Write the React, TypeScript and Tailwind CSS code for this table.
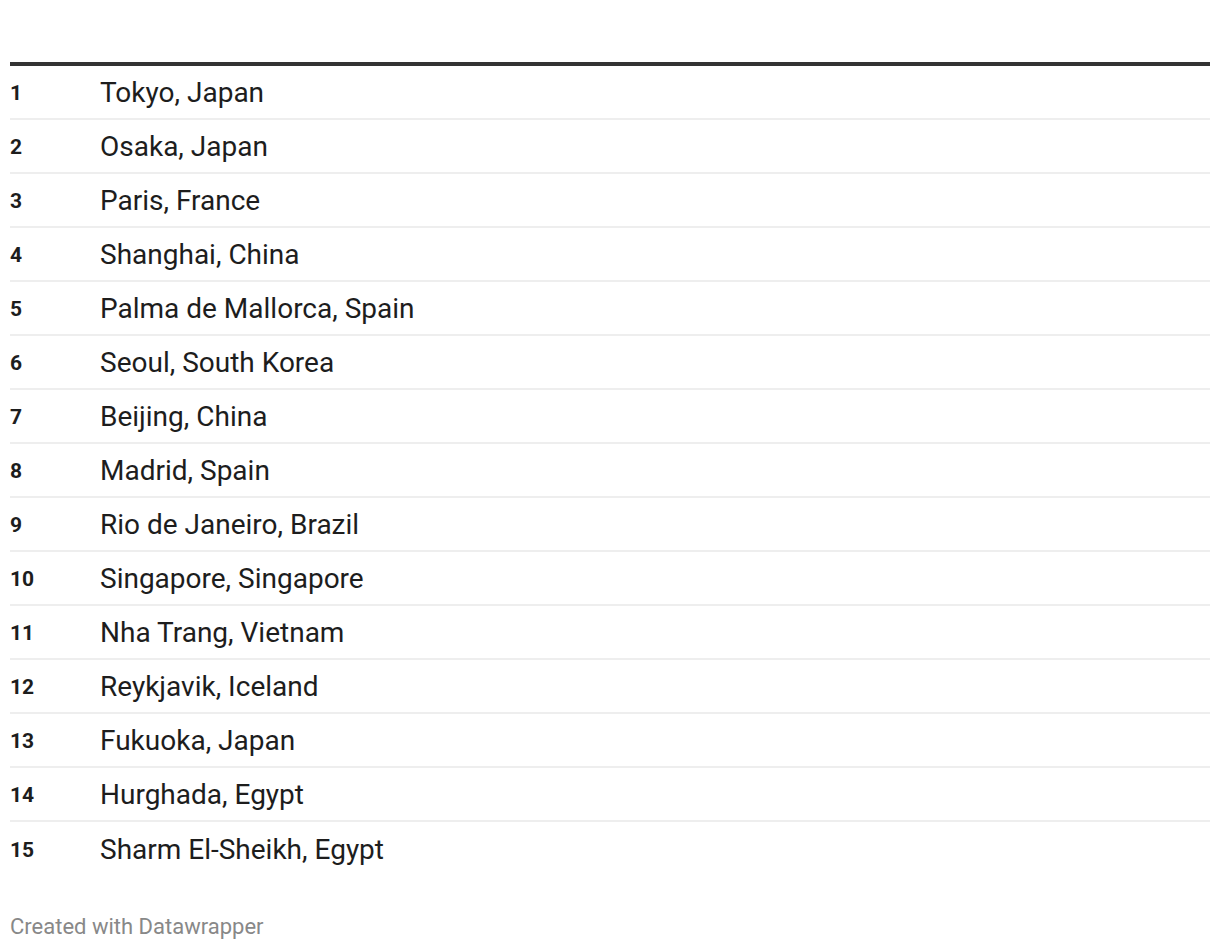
import React from "react";

const rows = [
  "Tokyo, Japan",
  "Osaka, Japan",
  "Paris, France",
  "Shanghai, China",
  "Palma de Mallorca, Spain",
  "Seoul, South Korea",
  "Beijing, China",
  "Madrid, Spain",
  "Rio de Janeiro, Brazil",
  "Singapore, Singapore",
  "Nha Trang, Vietnam",
  "Reykjavik, Iceland",
  "Fukuoka, Japan",
  "Hurghada, Egypt",
  "Sharm El-Sheikh, Egypt",
];

export default function App() {
  return (
    <div className="w-[1220px] h-[950px] bg-white px-[10px] pt-[62px] font-['Roboto',_'Liberation_Sans',_sans-serif] text-[#1d1d1d]">
      <div className="border-t-4 border-[#333333]">
        {rows.map((city, i) => (
          <div
            key={i}
            className={`flex items-center h-[54px] pt-[2px] ${i < rows.length - 1 ? "border-b-2 border-[#eeeeee]" : ""}`}
          >
            <div className="w-[90px] text-[21px] font-bold leading-none">{i + 1}</div>
            <div className="text-[28px] leading-none">{city}</div>
          </div>
        ))}
      </div>
      <div className="mt-[40px] text-[22px] leading-none text-[#888888]">Created with Datawrapper</div>
    </div>
  );
}
